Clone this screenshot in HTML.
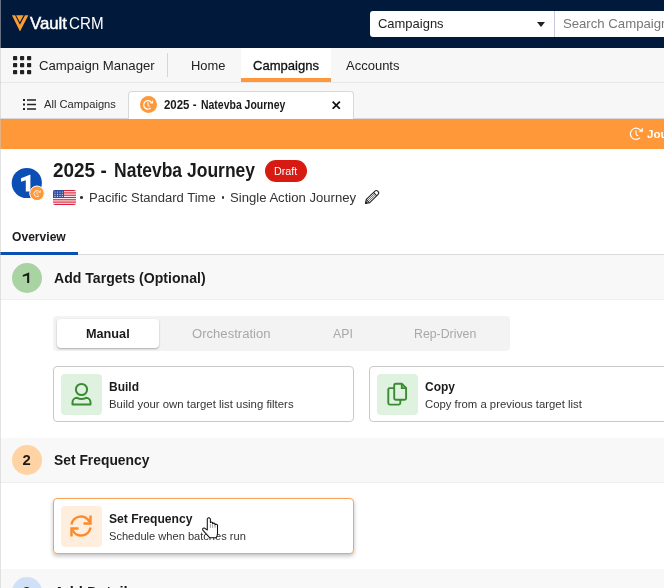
<!DOCTYPE html>
<html><head><meta charset="utf-8">
<style>
*{box-sizing:border-box;margin:0;padding:0}
html,body{width:664px;height:588px;overflow:hidden;background:#fff;font-family:"Liberation Sans",sans-serif;color:#222}
.a{position:absolute;white-space:nowrap}
#root{position:absolute;left:0;top:0;width:664px;height:588px;overflow:hidden;will-change:transform}
</style></head><body><div id="root">
<div class="a" style="left:0;top:0;width:664px;height:48px;background:#01193a"></div>
<svg class="a" style="left:10px;top:13px" width="20" height="20" viewBox="0 0 20 20">
    <path d="M1.9 2.2 H5.1 L9.9 11.7 L15 2.2 H18.4 L10 18.5 Z" fill="#f99c33"/>
    <path d="M6.1 2.2 H13.6 L9.9 9.2 Z" fill="#f99c33"/></svg>
<div class="a" style="left:30.30px;top:14px;font-size:15.99px;line-height:20px;transform:scaleX(1.0495);transform-origin:0 0;color:#fff;-webkit-text-stroke:0.45px #fff">Vault</div>
<div class="a" style="left:69.00px;top:14px;font-size:15.99px;line-height:20px;transform:scaleX(0.9485);transform-origin:0 0;color:#fff;">CRM</div>
<div class="a" style="left:370px;top:10.5px;width:184px;height:26px;background:#fff;border-radius:3px 0 0 3px"></div>
<div class="a" style="left:377.50px;top:15px;font-size:13.00px;line-height:17px;transform:scaleX(0.9973);transform-origin:0 0;color:#222;">Campaigns</div>
<svg class="a" style="left:537px;top:22px" width="8" height="5" viewBox="0 0 8 5"><path d="M0 0H8L4 5Z" fill="#222"/></svg>
<div class="a" style="left:554px;top:10.5px;width:110px;height:26px;background:#fff;border-left:1px solid #c9c9dd"></div>
<div class="a" style="left:562.90px;top:15px;font-size:13.20px;line-height:17px;color:#777;">Search Campaigns</div>
<div class="a" style="left:0;top:48px;width:664px;height:35px;background:#f7f7f7;border-bottom:1px solid #e8e8e8"></div>
<svg class="a" style="left:12px;top:55px" width="21" height="21" viewBox="0 0 21 21" fill="#222">
    <rect x="1" y="1" width="4.2" height="4.2" rx="0.8"/><rect x="8" y="1" width="4.2" height="4.2" rx="0.8"/><rect x="15" y="1" width="4.2" height="4.2" rx="0.8"/>
    <rect x="1" y="8" width="4.2" height="4.2" rx="0.8"/><rect x="8" y="8" width="4.2" height="4.2" rx="0.8"/><rect x="15" y="8" width="4.2" height="4.2" rx="0.8"/>
    <rect x="1" y="15" width="4.2" height="4.2" rx="0.8"/><rect x="8" y="15" width="4.2" height="4.2" rx="0.8"/><rect x="15" y="15" width="4.2" height="4.2" rx="0.8"/></svg>
<div class="a" style="left:39.00px;top:57px;font-size:13.00px;line-height:17px;transform:scaleX(1.0131);transform-origin:0 0;color:#222;">Campaign Manager</div>
<div class="a" style="left:167px;top:53px;width:1px;height:24px;background:#d6d6d6"></div>
<div class="a" style="left:190.50px;top:57px;font-size:13.00px;line-height:17px;transform:scaleX(0.9939);transform-origin:0 0;color:#222;">Home</div>
<div class="a" style="left:241px;top:48px;width:90px;height:34px;background:#fff"></div>
<div class="a" style="left:252.90px;top:57px;font-size:13.00px;line-height:17px;transform:scaleX(1.0033);transform-origin:0 0;color:#111;-webkit-text-stroke:0.3px #111">Campaigns</div>
<div class="a" style="left:241px;top:78px;width:90px;height:4px;background:#fe9838"></div>
<div class="a" style="left:345.60px;top:57px;font-size:13.00px;line-height:17px;transform:scaleX(1.0001);transform-origin:0 0;color:#222;">Accounts</div>
<div class="a" style="left:0;top:83px;width:664px;height:36px;background:#f7f7f7;border-bottom:1px solid #d8d8d8"></div>
<svg class="a" style="left:23px;top:99px" width="13" height="11" viewBox="0 0 13 11" fill="#222">
    <rect x="0" y="0" width="2" height="2"/><rect x="4" y="0.25" width="9" height="1.5"/>
    <rect x="0" y="4.5" width="2" height="2"/><rect x="4" y="4.75" width="9" height="1.5"/>
    <rect x="0" y="9" width="2" height="2"/><rect x="4" y="9.25" width="9" height="1.5"/></svg>
<div class="a" style="left:43.90px;top:97px;font-size:11.48px;line-height:15px;transform:scaleX(0.9722);transform-origin:0 0;color:#2a2a2a;">All Campaigns</div>
<div class="a" style="left:128px;top:91px;width:226px;height:28px;background:#fff;border:1px solid #d8d8d8;border-bottom:none;border-radius:4px 4px 0 0"></div>
<div class="a" style="left:140px;top:96px;width:17px;height:17px;border-radius:50%;background:#fe9838"></div>
<svg class="a" style="left:0;top:0;overflow:visible" width="1" height="1" fill="none" stroke="#fff"><path d="M151.12 102.20 A4.20 4.20 0 1 0 150.82 107.92" stroke-width="1.20"/><path d="M152.93 100.62 L152.93 103.40 L150.22 103.25 Z" fill="#fff" stroke-width="0.30"/><path d="M147.90 102.35 V105.05 Q147.90 106.03 149.55 106.25" stroke-width="1.06"/></svg>
<div class="a" style="left:164.20px;top:98px;font-size:11.92px;line-height:15px;font-weight:bold;transform:scaleX(0.9618);transform-origin:0 0;color:#1b1b1b;">2025 -</div>
<div class="a" style="left:201.00px;top:98px;font-size:11.92px;line-height:15px;font-weight:bold;transform:scaleX(0.8786);transform-origin:0 0;color:#1b1b1b;">Natevba Journey</div>
<svg class="a" style="left:332px;top:100.5px" width="8.5" height="8.5" viewBox="0 0 8 8"><path d="M0.6 0.6L7.4 7.4M7.4 0.6L0.6 7.4" stroke="#111" stroke-width="1.6"/></svg>
<div class="a" style="left:0;top:119px;width:664px;height:30px;background:#fe9838"></div>
<svg class="a" style="left:0;top:0;overflow:visible" width="1" height="1" fill="none" stroke="#fff"><path d="M640.29 130.20 A5.60 5.60 0 1 0 639.89 137.83" stroke-width="1.25"/><path d="M642.70 128.10 L642.70 131.80 L639.10 131.60 Z" fill="#fff" stroke-width="0.40"/><path d="M636.00 130.40 V134.00 Q636.00 135.30 638.20 135.60" stroke-width="1.10"/></svg>
<div class="a" style="left:647.00px;top:126px;font-size:11.63px;line-height:15px;font-weight:bold;color:#fff;">Journey</div>
<svg class="a" style="left:10px;top:165px" width="36" height="38" viewBox="0 0 36 38">
  <circle cx="16.8" cy="18" r="15.1" fill="#0b4fb5"/>
  <path d="M20.4 9.7 V26.5 H15.8 V15.2 L11 16.8 V13.2 L19.8 9.7 Z" fill="#fff"/>
  <circle cx="27" cy="28.3" r="7.3" fill="#fe9838" stroke="#fff" stroke-width="1"/>
</svg>
<svg class="a" style="left:0;top:0;overflow:visible" width="1" height="1" fill="none" stroke="#fff"><path d="M39.30 191.67 A3.00 3.00 0 1 0 39.08 195.76" stroke-width="0.85"/><path d="M40.59 190.55 L40.59 192.53 L38.66 192.42 Z" fill="#fff" stroke-width="0.21"/><path d="M37.00 191.78 V193.71 Q37.00 194.40 38.18 194.56" stroke-width="0.75"/></svg>
<div class="a" style="left:53.30px;top:158px;font-size:19.33px;line-height:25px;font-weight:bold;transform:scaleX(0.9798);transform-origin:0 0;color:#1b1b1b;">2025 -</div>
<div class="a" style="left:114.20px;top:158px;font-size:19.33px;line-height:25px;font-weight:bold;transform:scaleX(0.9056);transform-origin:0 0;color:#1b1b1b;">Natevba Journey</div>
<div class="a" style="left:264.5px;top:160px;width:42.5px;height:22px;border-radius:11px;background:#d71a12"></div>
<div class="a" style="left:273.90px;top:163px;font-size:11.63px;line-height:15px;transform:scaleX(0.9255);transform-origin:0 0;color:#fff;">Draft</div>
<svg class="a" style="left:53px;top:190px" width="23" height="15" viewBox="0 0 23 15">
  <defs><clipPath id="fc"><rect width="23" height="15" rx="2"/></clipPath></defs>
  <g clip-path="url(#fc)">
  <rect width="23" height="15" fill="#fff"/>
  <rect y="0" width="23" height="1.2" fill="#d9233d"/><rect y="2.3" width="23" height="1.2" fill="#d9233d"/>
  <rect y="4.6" width="23" height="1.2" fill="#d9233d"/><rect y="6.9" width="23" height="1.2" fill="#d9233d"/>
  <rect y="9.2" width="23" height="1.2" fill="#d9233d"/><rect y="11.5" width="23" height="1.2" fill="#d9233d"/>
  <rect y="13.8" width="23" height="1.2" fill="#d9233d"/>
  <rect width="11" height="8" fill="#2f4fa0"/><g fill="#fff" opacity="0.85"><circle cx="2" cy="2" r="0.6"/><circle cx="4.5" cy="2" r="0.6"/><circle cx="7" cy="2" r="0.6"/><circle cx="9.3" cy="2" r="0.6"/><circle cx="2" cy="4.3" r="0.6"/><circle cx="4.5" cy="4.3" r="0.6"/><circle cx="7" cy="4.3" r="0.6"/><circle cx="9.3" cy="4.3" r="0.6"/><circle cx="2" cy="6.4" r="0.6"/><circle cx="4.5" cy="6.4" r="0.6"/><circle cx="7" cy="6.4" r="0.6"/><circle cx="9.3" cy="6.4" r="0.6"/></g>
  </g></svg>
<div class="a" style="left:80.1px;top:196.2px;width:2.6px;height:2.6px;border-radius:50%;background:#333"></div>
<div class="a" style="left:89.00px;top:189px;font-size:13.08px;line-height:17px;transform:scaleX(0.9959);transform-origin:0 0;color:#333;">Pacific Standard Time</div>
<div class="a" style="left:221.6px;top:196.2px;width:2.6px;height:2.6px;border-radius:50%;background:#333"></div>
<div class="a" style="left:229.50px;top:189px;font-size:13.08px;line-height:17px;transform:scaleX(1.0028);transform-origin:0 0;color:#333;">Single Action Journey</div>
<svg class="a" style="left:360px;top:186px" width="24" height="22" viewBox="0 0 24 22" fill="none" stroke="#222" stroke-width="1.05" stroke-linejoin="round">
  <path d="M5.50 17.40 L9.47 16.77 L17.90 8.66 A2.30 2.30 0 0 0 14.70 5.34 L6.28 13.45 Z"/>
  <path d="M9.47 16.77 L6.28 13.45 M16.74 9.77 L13.55 6.45"/>
  <path d="M9.12 14.96 L14.95 9.34 M8.08 13.88 L13.91 8.26" stroke-width="0.7"/>
  <path d="M5.50 17.40 L7.63 17.02 L5.96 15.29 Z" fill="#1b1b1b" stroke-width="0.5"/></svg>
<div class="a" style="left:12.00px;top:229px;font-size:12.50px;line-height:16px;font-weight:bold;transform:scaleX(0.9672);transform-origin:0 0;color:#1b1b1b;">Overview</div>
<div class="a" style="left:0;top:254px;width:664px;height:1px;background:#dcdcdc"></div>
<div class="a" style="left:0;top:252px;width:78px;height:3px;background:#0b4fb5"></div>
<div class="a" style="left:0;top:255px;width:664px;height:45px;background:#f8f8f8;border-bottom:1px solid #efefef"></div>
<div class="a" style="left:12px;top:263px;width:30px;height:30px;border-radius:50%;background:#a9d3a2"></div>
<svg class="a" style="left:20px;top:271px" width="12" height="14" viewBox="0 0 12 14"><path d="M9.2 1.6 V11.9 H7.1 V4.4 L2.8 5.8 V4.1 L8.9 1.6 Z" fill="#1b1b1b"/></svg>
<div class="a" style="left:53.50px;top:268px;font-size:15.41px;line-height:20px;font-weight:bold;transform:scaleX(0.9145);transform-origin:0 0;color:#1b1b1b;">Add Targets (Optional)</div>
<div class="a" style="left:53px;top:315.5px;width:457px;height:35.5px;background:#f3f3f3;border-radius:4px"></div>
<div class="a" style="left:57px;top:319px;width:102px;height:29px;background:#fff;border-radius:4px;box-shadow:0 1px 2px rgba(0,0,0,0.3)"></div>
<div class="a" style="left:86.00px;top:325px;font-size:13.52px;line-height:17px;font-weight:bold;transform:scaleX(0.9384);transform-origin:0 0;color:#1b1b1b;">Manual</div>
<div class="a" style="left:191.70px;top:325px;font-size:13.52px;line-height:17px;transform:scaleX(0.9683);transform-origin:0 0;color:#a8a8a8;">Orchestration</div>
<div class="a" style="left:332.50px;top:325px;font-size:13.52px;line-height:17px;transform:scaleX(0.9144);transform-origin:0 0;color:#a8a8a8;">API</div>
<div class="a" style="left:414.30px;top:325px;font-size:13.52px;line-height:17px;transform:scaleX(0.9117);transform-origin:0 0;color:#a8a8a8;">Rep-Driven</div>
<div class="a" style="left:53px;top:366px;width:301px;height:56px;border:1px solid #c9c9c9;border-radius:4px;background:#fff;"></div>
<div class="a" style="left:60.5px;top:374px;width:41px;height:41px;border-radius:4px;background:#dff1df"></div>
<svg class="a" style="left:71px;top:382px" width="21" height="25" viewBox="0 0 21 25">
      <circle cx="10.5" cy="7.5" r="5.6" fill="none" stroke="#3b8b32" stroke-width="2"/>
      <path d="M1.5 22.5 H19.5 V20.5 C19.5 17.8 17.5 15.8 15 15.8 C13.5 16.6 12 17 10.5 17 C9 17 7.5 16.6 6 15.8 C3.5 15.8 1.5 17.8 1.5 20.5 Z" fill="none" stroke="#3b8b32" stroke-width="2" stroke-linejoin="round"/></svg>
<div class="a" style="left:109.00px;top:378px;font-size:13.23px;line-height:17px;font-weight:bold;transform:scaleX(0.9073);transform-origin:0 0;color:#1b1b1b;">Build</div>
<div class="a" style="left:109.00px;top:397px;font-size:11.48px;line-height:15px;transform:scaleX(0.9916);transform-origin:0 0;color:#333;">Build your own target list using filters</div>
<div class="a" style="left:369px;top:366px;width:320px;height:56px;border:1px solid #c9c9c9;border-radius:4px;background:#fff;"></div>
<div class="a" style="left:376.5px;top:374px;width:41px;height:41px;border-radius:4px;background:#dff1df"></div>
<svg class="a" style="left:386px;top:382px" width="22" height="25" viewBox="0 0 22 25">
      <path d="M8.2 6.1 H3.8 Q2.3 6.1 2.3 7.6 V21.1 Q2.3 22.6 3.8 22.6 H12.8 Q14.3 22.6 14.3 21.1 V17.8" fill="none" stroke="#3b8b32" stroke-width="1.9"/>
      <path d="M9.7 1.8 H16 L20.1 5.9 V16.3 Q20.1 17.8 18.6 17.8 H9.7 Q8.2 17.8 8.2 16.3 V3.3 Q8.2 1.8 9.7 1.8 Z" fill="none" stroke="#3b8b32" stroke-width="1.9" stroke-linejoin="round"/>
      <path d="M15.8 2 V6.1 H19.9" fill="none" stroke="#3b8b32" stroke-width="1.9"/></svg>
<div class="a" style="left:425.00px;top:378px;font-size:13.23px;line-height:17px;font-weight:bold;transform:scaleX(0.9073);transform-origin:0 0;color:#1b1b1b;">Copy</div>
<div class="a" style="left:425.00px;top:397px;font-size:11.48px;line-height:15px;transform:scaleX(0.9879);transform-origin:0 0;color:#333;">Copy from a previous target list</div>
<div class="a" style="left:0;top:438px;width:664px;height:45px;background:#f8f8f8;border-bottom:1px solid #efefef"></div>
<div class="a" style="left:12px;top:445px;width:30px;height:30px;border-radius:50%;background:#ffd3a3"></div>
<div class="a" style="left:22.60px;top:451px;font-size:14.83px;line-height:19px;font-weight:bold;color:#1b1b1b;">2</div>
<div class="a" style="left:53.50px;top:450px;font-size:15.41px;line-height:20px;font-weight:bold;transform:scaleX(0.8987);transform-origin:0 0;color:#1b1b1b;">Set Frequency</div>
<div class="a" style="left:53px;top:498px;width:301px;height:56px;border:1px solid #f8a458;border-radius:4px;background:#fff;box-shadow:0 2px 4px rgba(0,0,0,0.25);"></div>
<div class="a" style="left:60.5px;top:506px;width:41px;height:41px;border-radius:4px;background:#ffeedd"></div>
<svg class="a" style="left:69px;top:514px" width="24" height="24" viewBox="0 0 24 24">
      <path d="M2.5 10.5 A9.5 9.5 0 0 1 20.5 8" fill="none" stroke="#fd8a2a" stroke-width="2.4"/>
      <path d="M21.5 13.5 A9.5 9.5 0 0 1 3.5 16" fill="none" stroke="#fd8a2a" stroke-width="2.4"/>
      <path d="M21.5 1.5 V9.5 H14.5" fill="none" stroke="#fd8a2a" stroke-width="2.4"/>
      <path d="M2.5 22.5 V14.5 H9.5" fill="none" stroke="#fd8a2a" stroke-width="2.4"/></svg>
<div class="a" style="left:109.00px;top:510px;font-size:13.23px;line-height:17px;font-weight:bold;transform:scaleX(0.9163);transform-origin:0 0;color:#1b1b1b;">Set Frequency</div>
<div class="a" style="left:109.00px;top:529px;font-size:11.48px;line-height:15px;transform:scaleX(0.9669);transform-origin:0 0;color:#333;">Schedule when batches run</div>
<svg class="a" style="left:190px;top:505px" width="40" height="40" viewBox="0 0 40 40">
  <path d="M17.3 14 Q18.8 11.6 20.4 14 V17.6 Q21.5 16.4 22.6 17.6 V18.7 Q23.8 17.5 25 18.7 V19.9 Q26.3 18.7 27.5 20.1 V28.5 Q27.5 31 26 32.8 H19.8 L12.8 25.2 Q12.2 23 14.1 22.9 L17.3 25 Z" fill="#fff" stroke="#111" stroke-width="1.05" stroke-linejoin="round"/>
  <path d="M20.4 19 V22.8 M22.6 19.5 V22.8 M25 20.5 V22.8" stroke="#888" stroke-width="0.8"/></svg>
<div class="a" style="left:0;top:569px;width:664px;height:45px;background:#f8f8f8;border-bottom:1px solid #efefef"></div>
<div class="a" style="left:12px;top:577px;width:30px;height:30px;border-radius:50%;background:#cfe0f7"></div>
<div class="a" style="left:22.60px;top:583px;font-size:14.83px;line-height:19px;font-weight:bold;color:#1b1b1b;">3</div>
<div class="a" style="left:53.50px;top:582px;font-size:15.41px;line-height:20px;font-weight:bold;transform:scaleX(0.9677);transform-origin:0 0;color:#1b1b1b;">Add Details</div>
<div class="a" style="left:0;top:0;width:1px;height:588px;background:rgba(200,200,200,0.5)"></div>
</div></body></html>
